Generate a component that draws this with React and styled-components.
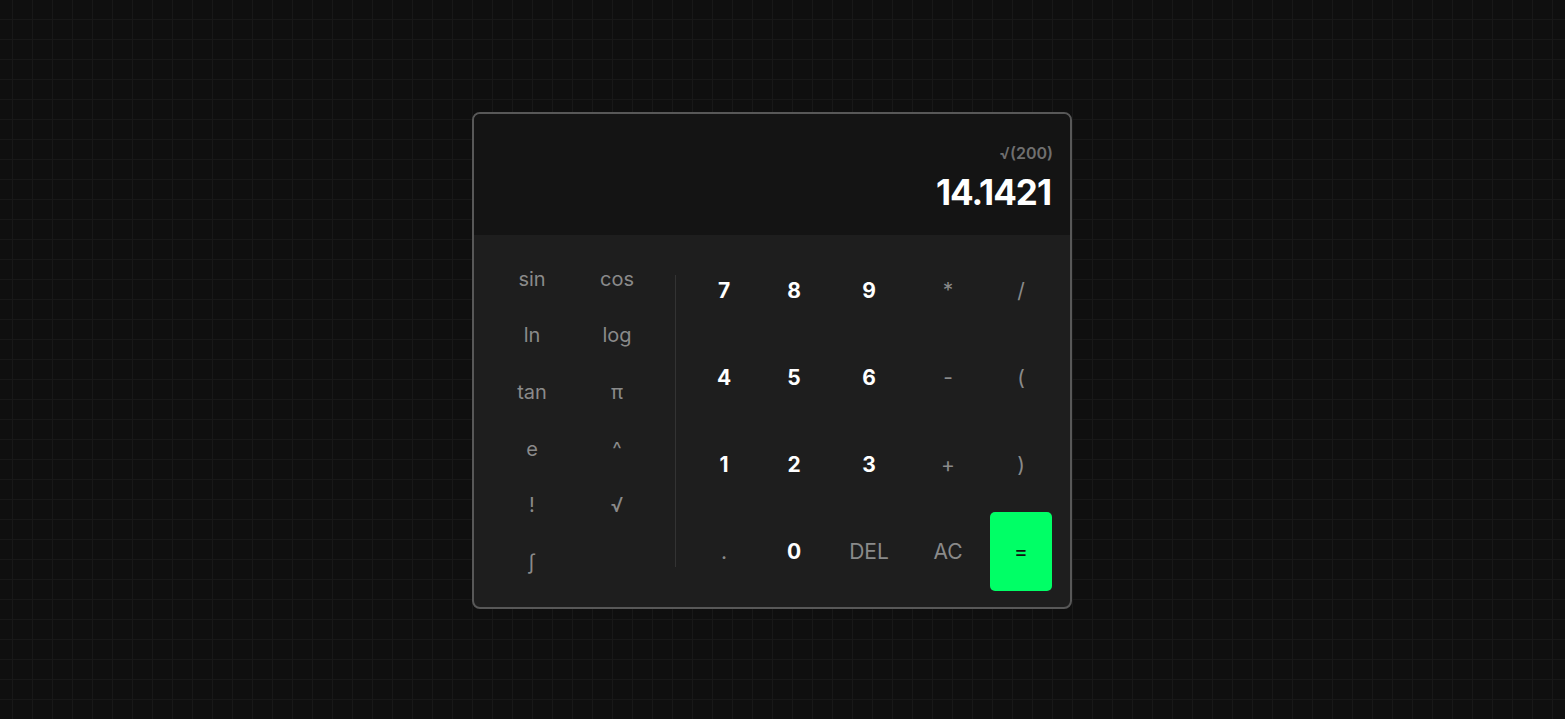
import styled, { createGlobalStyle } from "styled-components";

const GlobalStyle = createGlobalStyle`
  * {
    box-sizing: border-box;
  }

  body {
    margin: 0;
    background-color: #0f0f0f;
    background-image:
      linear-gradient(to right, #181818 1px, transparent 1px),
      linear-gradient(to bottom, #181818 1px, transparent 1px);
    background-size: 20px 20px;
    background-position: 12px 19px;
    font-family: "Inter", "Liberation Sans", sans-serif;
  }
`;

const Page = styled.div`
  min-height: 100vh;
  display: flex;
  align-items: center;
  justify-content: center;
  padding: 1px 21px 0 0;
`;

const Calculator = styled.div`
  width: 600px;
  border: 2px solid #585858;
  border-radius: 8px;
  overflow: hidden;
  background-color: #1e1e1e;
`;

const Screen = styled.div`
  height: 121px;
  background-color: #141414;
  display: flex;
  flex-direction: column;
  align-items: flex-end;
  justify-content: flex-end;
  padding: 0 17px 22px 16px;
`;

const Expression = styled.div`
  font-size: 16px;
  font-weight: 600;
  color: #6f6f6f;
  line-height: 20px;
  margin-bottom: 8px;
`;

const Result = styled.div`
  font-size: 35px;
  font-weight: 700;
  color: #fff;
  line-height: 42px;
  letter-spacing: -1px;
  margin-right: 2px;
`;

const Keypad = styled.div`
  display: flex;
  padding: 16px 16px 16px 16px;
`;

const Scientific = styled.div`
  width: 170px;
  height: 340px;
  display: grid;
  grid-template-columns: 84px 86px;
  grid-template-rows: repeat(6, 1fr);
`;

const Divider = styled.div`
  width: 1px;
  margin: 24px 15px;
  background-color: #333;
`;

const Basic = styled.div`
  display: grid;
  grid-template-columns: 64px 52px 74px 60px 62px;
  grid-template-rows: repeat(4, 79px);
  column-gap: 12px;
  row-gap: 8px;
  margin-left: 1px;
`;

const Key = styled.button`
  border: none;
  background: ${({ $accent }) => ($accent ? "#00ff66" : "transparent")};
  border-radius: 5px;
  padding: 0;
  font-family: inherit;
  font-size: ${({ $small }) => ($small ? "20px" : "21px")};
  font-weight: ${({ $num }) => ($num ? 700 : 400)};
  color: ${({ $num, $accent }) => ($accent ? "#111" : $num ? "#fff" : "#8a8a8a")};
  display: flex;
  align-items: center;
  justify-content: center;
  cursor: pointer;

  &:hover {
    background: ${({ $accent }) => ($accent ? "#00e65c" : "#262626")};
  }
`;

const scientificKeys = ["sin", "cos", "ln", "log", "tan", "π", "e", "^", "!", "√", "∫"];

const basicKeys = [
  ["7", true], ["8", true], ["9", true], ["*", false], ["/", false],
  ["4", true], ["5", true], ["6", true], ["-", false], ["(", false],
  ["1", true], ["2", true], ["3", true], ["+", false], [")", false],
  [".", false], ["0", true], ["DEL", false], ["AC", false],
];

export default function App() {
  return (
    <>
      <GlobalStyle />
      <Page>
        <Calculator>
          <Screen>
            <Expression>√(200)</Expression>
            <Result>14.1421</Result>
          </Screen>
          <Keypad>
            <Scientific>
              {scientificKeys.map((k) => (
                <Key key={k} $small>
                  {k}
                </Key>
              ))}
            </Scientific>
            <Divider />
            <Basic>
              {basicKeys.map(([label, num]) => (
                <Key key={label} $num={num}>
                  {label}
                </Key>
              ))}
              <Key $accent>=</Key>
            </Basic>
          </Keypad>
        </Calculator>
      </Page>
    </>
  );
}
